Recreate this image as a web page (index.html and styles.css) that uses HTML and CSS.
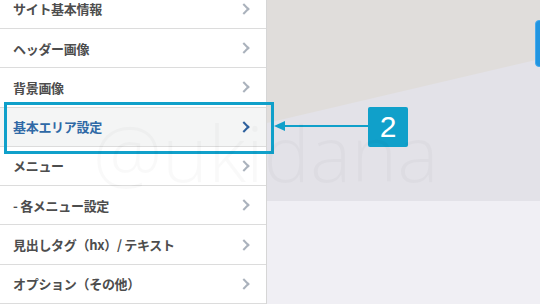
FILE: index.html
```html
<!DOCTYPE html>
<html lang="ja">
<head>
<meta charset="utf-8">
<link rel="stylesheet" href="styles.css">
</head>
<body>
<div class="page">
  <nav class="sidebar">
    <ul class="menu">
      <li class="item"><span>サイト基本情報</span><i class="chev"></i></li>
      <li class="item"><span>ヘッダー画像</span><i class="chev"></i></li>
      <li class="item"><span>背景画像</span><i class="chev"></i></li>
      <li class="item active"><span>基本エリア設定</span><i class="chev"></i></li>
      <li class="item"><span>メニュー</span><i class="chev"></i></li>
      <li class="item"><span>- 各メニュー設定</span><i class="chev"></i></li>
      <li class="item"><span>見出しタグ（hx）/ テキスト</span><i class="chev"></i></li>
      <li class="item"><span>オプション（その他）</span><i class="chev"></i></li>
    </ul>
  </nav>
  <main class="canvas">
    <div class="top">
      <svg class="slope" viewBox="0 0 273 201" preserveAspectRatio="none" width="273" height="201">
        <polygon points="0,0 273,0 273,59 0,123" fill="#e0dddb"/>
      </svg>
      <div class="btn"></div>
    </div>
    <div class="bottom"></div>
  </main>
  <div class="highlight"></div>
  <div class="arrow"><span class="head"></span><span class="line"></span></div>
  <div class="badge">2</div>
  <div class="watermark">@ukidana</div>
</div>
</body>
</html>
```

FILE: styles.css
```css
html, body {
  margin: 0;
  padding: 0;
  width: 540px;
  height: 304px;
  overflow: hidden;
  background: #f0eff4;
}
.page {
  position: relative;
  display: flex;
  width: 540px;
  height: 304px;
  overflow: hidden;
  font-family: "Noto Sans CJK JP", "Noto Sans", sans-serif;
}
.sidebar {
  width: 266px;
  flex: none;
  background: #fff;
  border-right: 1px solid #d6d6d6;
}
.menu {
  list-style: none;
  margin: -10.4px 0 0;
  padding: 0;
}
.item {
  display: flex;
  align-items: center;
  justify-content: space-between;
  height: 38.3px;
  border-bottom: 1px solid #dcdcdc;
  padding: 0 16px 0 13px;
  font-size: 13px;
  font-weight: 700;
  color: #4d4d4d;
  letter-spacing: -0.3px;
}
.item.active {
  background: #f4f5f5;
  color: #2f69a6;
}
.chev {
  width: 6px;
  height: 6px;
  border-right: 2px solid #aab2bc;
  border-top: 2px solid #aab2bc;
  transform: rotate(45deg);
  margin-right: 2px;
}
.active .chev {
  border-color: #2c5f9c;
}
.canvas {
  flex: 1;
  display: flex;
  flex-direction: column;
}
.top {
  position: relative;
  height: 201px;
  background: #e3e2e8;
}
.slope {
  display: block;
}
.btn {
  position: absolute;
  left: 268px;
  top: 20px;
  width: 12px;
  height: 47px;
  border-radius: 4px;
  background: #2195e0;
  border: 1px solid #45aaee;
  box-sizing: border-box;
}
.bottom {
  flex: 1;
  background: #f0eff4;
}
.highlight {
  position: absolute;
  left: 4px;
  top: 102px;
  width: 270px;
  height: 52px;
  box-sizing: border-box;
  border: 3px solid #10a0ca;
}
.arrow {
  position: absolute;
  left: 274px;
  top: 121px;
  width: 96px;
  height: 10px;
  display: flex;
  align-items: center;
}
.arrow .head {
  width: 0;
  height: 0;
  border-top: 5px solid transparent;
  border-bottom: 5px solid transparent;
  border-right: 11px solid #10a0ca;
}
.arrow .line {
  flex: 1;
  height: 2px;
  background: #10a0ca;
}
.badge {
  position: absolute;
  left: 368px;
  top: 107px;
  width: 40px;
  height: 40px;
  border-radius: 2px;
  background: #10a0ca;
  color: #fff;
  font-family: "Liberation Sans", Arial, sans-serif;
  font-size: 30px;
  line-height: 40px;
  text-align: center;
}
.watermark {
  position: absolute;
  left: 93px;
  top: 102px;
  font-family: "Open Sans", sans-serif;
  font-weight: 300;
  font-size: 78px;
  line-height: 100px;
  color: rgba(0, 0, 0, 0.025);
  pointer-events: none;
  white-space: nowrap;
}
```
